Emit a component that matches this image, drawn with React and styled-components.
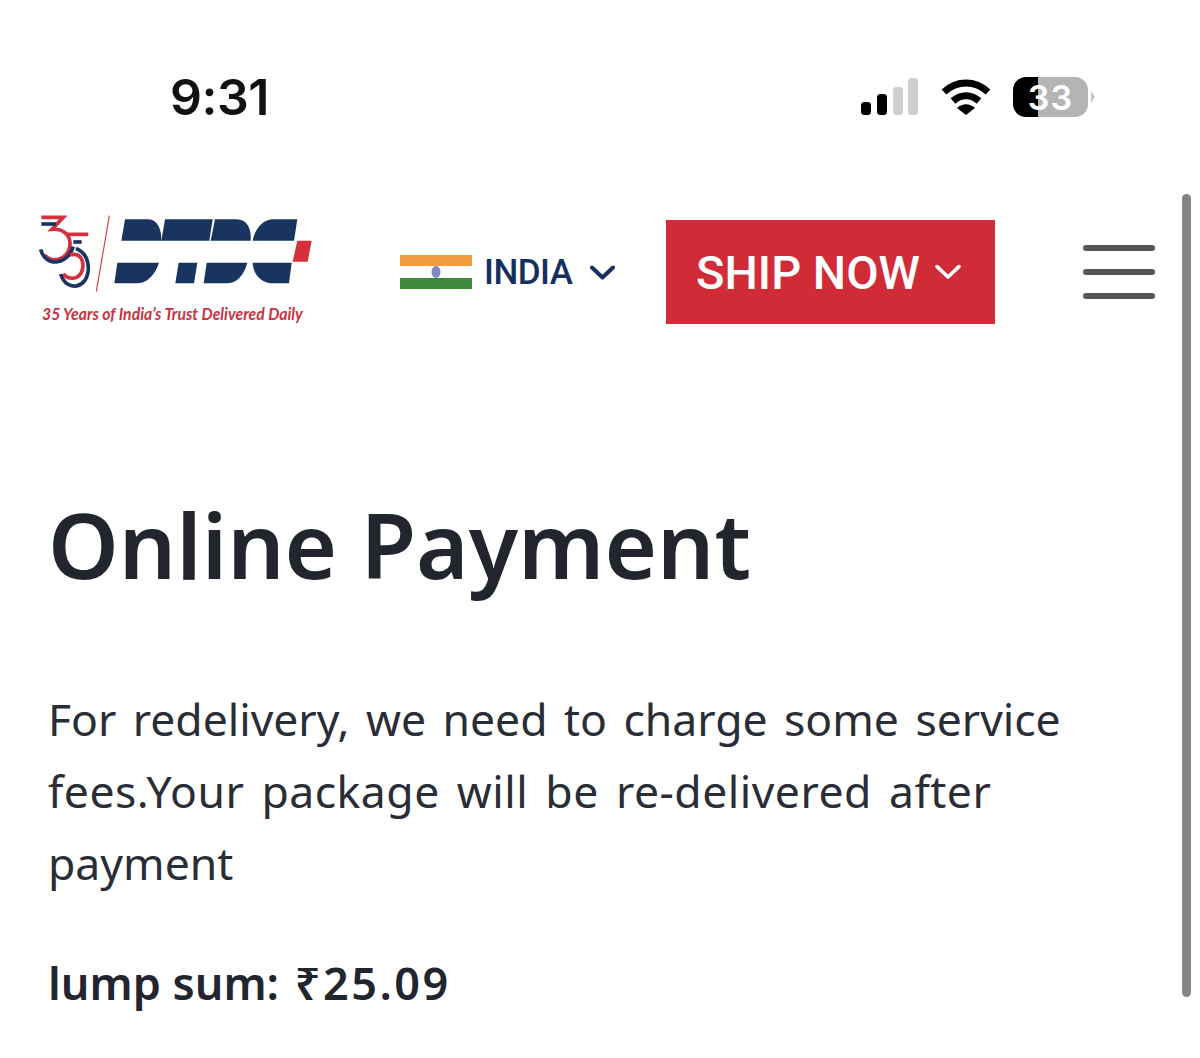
import React from "react";
import styled, { createGlobalStyle } from "styled-components";

const Global = createGlobalStyle`
  html, body { margin: 0; padding: 0; background: #fff; }
  body { font-family: "Noto Sans", "Open Sans", sans-serif; overflow: hidden; }
`;
const Page = styled.div`
  position: relative;
  width: 1200px;
  height: 1058px;
  overflow: hidden;
  background: #fff;
`;
const StatusBar = styled.div`
  height: 195px;
  display: flex;
  align-items: flex-start;
  justify-content: space-between;
  padding: 69px 105px 0 170px;
  box-sizing: border-box;
`;
const Time = styled.div`
  font-family: "Inter", sans-serif;
  font-size: 50px;
  line-height: 56px;
  font-weight: 600;
  color: #111;
  letter-spacing: -0.5px;
`;
const StatusIcons = styled.div`
  display: flex;
  align-items: center;
  gap: 22px;
  height: 56px;
`;
const Battery = styled.div`
  width: 75px;
  height: 40px;
  border-radius: 13px;
  overflow: hidden;
  background: linear-gradient(90deg, #000 0 33%, #b4b4b4 33% 100%);
  display: flex;
  align-items: center;
  justify-content: center;
  color: #fff;
  font-family: "Inter", sans-serif;
  font-weight: 600;
  font-size: 34px;
  letter-spacing: 1px;
`;
const BatteryWrap = styled.div`
  display: flex;
  align-items: center;
  gap: 3px;
`;
const BatteryCap = styled.div`
  width: 4px;
  height: 12px;
  background: #c4c4c4;
  clip-path: polygon(0 0, 100% 50%, 0 100%);
`;
const Header = styled.header`
  display: flex;
  align-items: center;
  height: 154px;
  padding-left: 20px;
`;
const LogoBox = styled.div`
  position: relative;
  width: 310px;
  height: 140px;
  flex: none;
  margin-top: -4px;
`;
const Tagline = styled.div`
  position: absolute;
  left: 22px;
  top: 103px;
  font-family: "Lato", sans-serif;
  font-style: italic;
  font-weight: 700;
  font-size: 17.5px;
  line-height: 22px;
  white-space: nowrap;
  color: #c8323f;
  transform: scaleX(.9);
  transform-origin: left center;
`;
const Country = styled.div`
  display: flex;
  align-items: center;
  margin-left: 70px;
  width: 266px;
  flex: none;
`;
const CountryName = styled.span`
  font-family: "Roboto", sans-serif;
  font-size: 35px;
  font-weight: 500;
  letter-spacing: -0.5px;
  color: #15305f;
  margin-left: 12px;
  margin-right: 17px;
  line-height: 1;
`;
const ShipButton = styled.button`
  width: 329px;
  height: 104px;
  flex: none;
  border: 0;
  padding: 0 4px 0 0;
  background: #d22b38;
  color: #fff;
  font-family: "Roboto", sans-serif;
  font-size: 47px;
  font-weight: 500;
  display: flex;
  align-items: center;
  justify-content: center;
  gap: 15px;
`;
const Burger = styled.div`
  margin-left: 88px;
  width: 72px;
  display: flex;
  flex-direction: column;
  gap: 18px;
`;
const BurgerLine = styled.span`
  display: block;
  height: 6px;
  border-radius: 3px;
  background: #55565b;
`;
const Main = styled.main`
  padding: 0 130px 0 48px;
`;
const Title = styled.h1`
  margin: 140px 0 0;
  font-size: 90px;
  line-height: 110px;
  font-weight: 600;
  color: #22252e;
`;
const Body = styled.div`
  margin: 84px 0 0;
  font-size: 44.5px;
  line-height: 72px;
  font-weight: 400;
  color: #2a2d35;
  word-spacing: 5px;
`;
const BodyLine = styled.div`
  white-space: nowrap;
  letter-spacing: ${(p) => p.$tracking}px;
`;
const Sum = styled.p`
  margin: 54px 0 0;
  font-size: 45px;
  line-height: 60px;
  font-weight: 600;
  color: #22252e;
`;
const Amount = styled.span`
  letter-spacing: 2.5px;
  margin-left: 4px;
`;
const ScrollThumb = styled.div`
  position: absolute;
  left: 1182px;
  top: 194px;
  width: 9px;
  height: 803px;
  border-radius: 5px;
  background: #858585;
`;

const Chevron = ({ size, color, sw }) => (
  <svg width={size} height={size * 0.6} viewBox="0 0 25 15" fill="none">
    <path d="M2 2.5 L12.5 12.5 L23 2.5" stroke={color} strokeWidth={sw} strokeLinecap="round" strokeLinejoin="round" />
  </svg>
);

const Signal = () => (
  <svg width="58" height="38" viewBox="0 0 58 38">
    <rect x="0" y="24" width="10" height="13" rx="3.5" fill="#000" />
    <rect x="16" y="16" width="10" height="21" rx="3.5" fill="#000" />
    <rect x="32" y="9" width="10" height="28" rx="3.5" fill="#cfcfcf" />
    <rect x="47" y="0" width="10" height="37" rx="3.5" fill="#cfcfcf" />
  </svg>
);
const Wifi = () => (
  <svg width="50" height="38" viewBox="0 0 50 38" fill="none" stroke="#000" strokeWidth="7">
    <path d="M3 14 C16 2 34 2 47 14" />
    <path d="M12 23 C20 16 30 16 38 23" />
    <path d="M16 30 L25 37 L34 30 C28 25 22 25 16 30 Z" fill="#000" stroke="none" />
  </svg>
);
const Flag = () => (
  <svg width="72" height="34" viewBox="0 0 72 34">
    <rect width="72" height="11" fill="#f39b3f" />
    <rect y="11" width="72" height="12" fill="#fff" />
    <rect y="23" width="72" height="11" fill="#3f8a3a" />
    <ellipse cx="36" cy="17" rx="4.5" ry="6" fill="#8585c8" />
  </svg>
);
const Logo = () => (
  <svg width="310" height="140" viewBox="0 0 930 420">
    <path d="M268 47 L229 275" stroke="#d0404c" strokeWidth="3.5" />
    <g fill="none" strokeWidth="11">
      <path d="M64 52 H130 L96 88 C130 85 152 105 150 135 C146 175 100 195 74 165" stroke="#d62f3d" />
      <path d="M62 148 C75 200 140 200 160 140" stroke="#1b3560" />
      <path d="M64 72 H108" stroke="#1b3560" />
      <path d="M140 103 H205" stroke="#d62f3d" />
      <path d="M160 126 H185" stroke="#1b3560" />
      <path d="M150 165 C185 155 195 190 185 215 C175 240 145 240 130 222" stroke="#d62f3d" />
      <path d="M122 222 C140 280 205 265 205 205 C205 175 190 155 168 145" stroke="#1b3560" />
    </g>
    <g fill="#1a3460">
      <path d="M315 58 H385 C410 58 425 85 424 122 H304 Z" />
      <path d="M435 58 H578 L568 122 H424 Z" />
      <path d="M585 58 H650 C680 58 695 85 692 122 H572 Z" />
      <path d="M760 58 H832 L822 122 H698 C705 85 730 58 760 58 Z" />
      <path d="M292 188 H417 C405 225 380 250 350 250 H283 Z" />
      <path d="M476 188 H532 L522 250 H466 Z" />
      <path d="M560 188 H682 C672 225 650 250 620 250 H551 Z" />
      <path d="M698 188 H815 L807 250 H760 C725 250 700 225 698 188 Z" />
    </g>
    <path d="M832 122 H875 L863 185 H818 Z" fill="#d62f3d" />
  </svg>
);

export default function App() {
  return (
    <Page>
      <Global />
      <StatusBar>
        <Time>9:31</Time>
        <StatusIcons>
          <Signal />
          <Wifi />
          <BatteryWrap>
            <Battery>33</Battery>
            <BatteryCap />
          </BatteryWrap>
        </StatusIcons>
      </StatusBar>
      <Header>
        <LogoBox>
          <Logo />
          <Tagline>35 Years of India’s Trust Delivered Daily</Tagline>
        </LogoBox>
        <Country>
          <Flag />
          <CountryName>INDIA</CountryName>
          <Chevron size={25} color="#15305f" sw={4} />
        </Country>
        <ShipButton>
          SHIP NOW
          <Chevron size={26} color="#fff" sw={3.5} />
        </ShipButton>
        <Burger>
          <BurgerLine />
          <BurgerLine />
          <BurgerLine />
        </Burger>
      </Header>
      <Main>
        <Title>Online Payment</Title>
        <Body>
          <BodyLine $tracking={-0.03}>For redelivery, we need to charge some service</BodyLine>
          <BodyLine $tracking={0.5}>fees.Your package will be re-delivered after</BodyLine>
          <BodyLine $tracking={0}>payment</BodyLine>
        </Body>
        <Sum>lump sum: <Amount>₹25.09</Amount></Sum>
      </Main>
      <ScrollThumb />
    </Page>
  );
}
